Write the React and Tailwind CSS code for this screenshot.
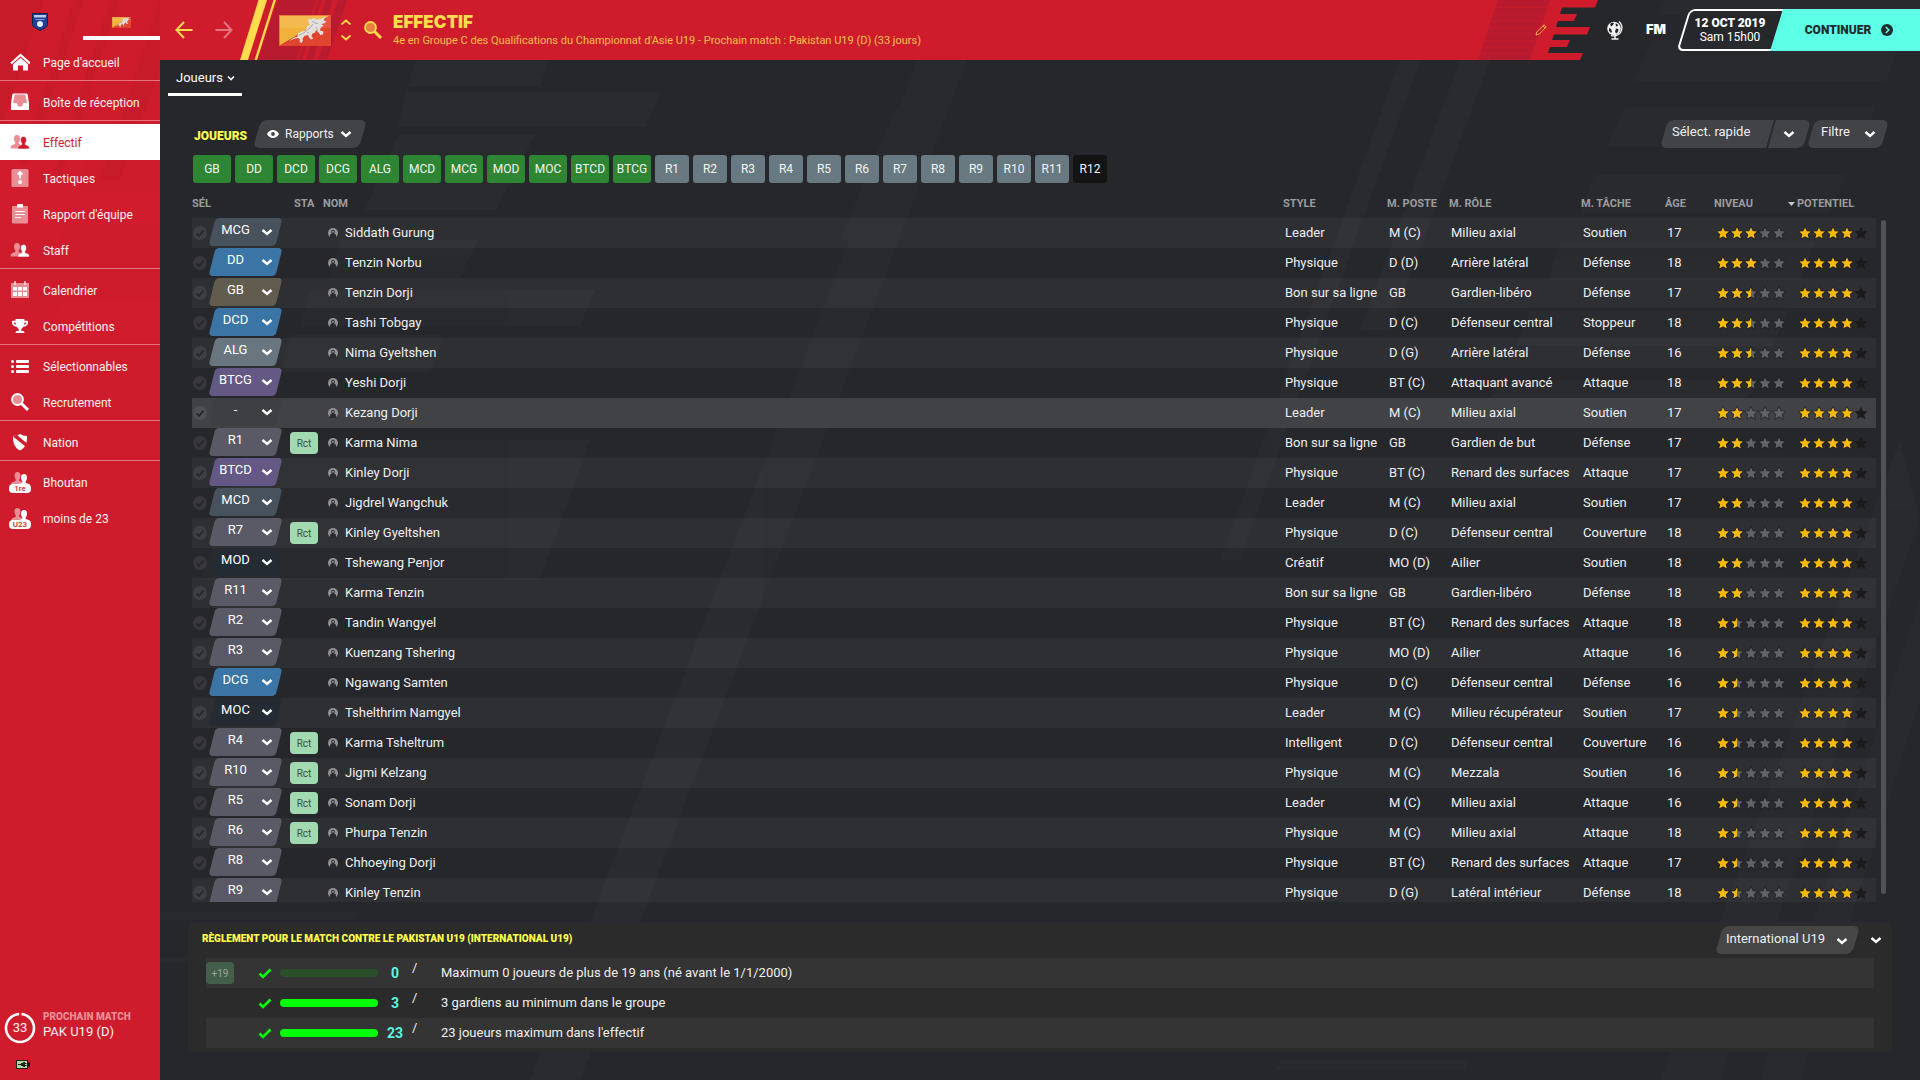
import React from 'react';
import { FaTrophy } from 'react-icons/fa';

const YELLOW = '#ffdc4e';
const PINK = '#ea8d95';

const pillColors = {
    MCG: 'before:bg-[#47525d]',
    MCD: 'before:bg-[#47525d]',
    DD: 'before:bg-[#3b75a6]',
    DCD: 'before:bg-[#3b75a6]',
    DCG: 'before:bg-[#3b75a6]',
    GB: 'before:bg-[#625c4f]',
    ALG: 'before:bg-[#697680]',
    BTCG: 'before:bg-[#645885]',
    BTCD: 'before:bg-[#645885]',
    MOD: 'before:bg-[#252b33]',
    MOC: 'before:bg-[#252b33]',
    '-': 'before:bg-[#3e3f42]',
};

const players = [
    ['MCG', false, 'Siddath Gurung', 'Leader', 'M (C)', 'Milieu axial', 'Soutien', 17, 3],
    ['DD', false, 'Tenzin Norbu', 'Physique', 'D (D)', 'Arrière latéral', 'Défense', 18, 3],
    ['GB', false, 'Tenzin Dorji', 'Bon sur sa ligne', 'GB', 'Gardien-libéro', 'Défense', 17, 2.5],
    ['DCD', false, 'Tashi Tobgay', 'Physique', 'D (C)', 'Défenseur central', 'Stoppeur', 18, 2.5],
    ['ALG', false, 'Nima Gyeltshen', 'Physique', 'D (G)', 'Arrière latéral', 'Défense', 16, 2.5],
    ['BTCG', false, 'Yeshi Dorji', 'Physique', 'BT (C)', 'Attaquant avancé', 'Attaque', 18, 2.5],
    ['-', false, 'Kezang Dorji', 'Leader', 'M (C)', 'Milieu axial', 'Soutien', 17, 2],
    ['R1', true, 'Karma Nima', 'Bon sur sa ligne', 'GB', 'Gardien de but', 'Défense', 17, 2],
    ['BTCD', false, 'Kinley Dorji', 'Physique', 'BT (C)', 'Renard des surfaces', 'Attaque', 17, 2],
    ['MCD', false, 'Jigdrel Wangchuk', 'Leader', 'M (C)', 'Milieu axial', 'Soutien', 17, 2],
    ['R7', true, 'Kinley Gyeltshen', 'Physique', 'D (C)', 'Défenseur central', 'Couverture', 18, 2],
    ['MOD', false, 'Tshewang Penjor', 'Créatif', 'MO (D)', 'Ailier', 'Soutien', 18, 2],
    ['R11', false, 'Karma Tenzin', 'Bon sur sa ligne', 'GB', 'Gardien-libéro', 'Défense', 18, 2],
    ['R2', false, 'Tandin Wangyel', 'Physique', 'BT (C)', 'Renard des surfaces', 'Attaque', 18, 1.5],
    ['R3', false, 'Kuenzang Tshering', 'Physique', 'MO (D)', 'Ailier', 'Attaque', 16, 1.5],
    ['DCG', false, 'Ngawang Samten', 'Physique', 'D (C)', 'Défenseur central', 'Défense', 16, 1.5],
    ['MOC', false, 'Tshelthrim Namgyel', 'Leader', 'M (C)', 'Milieu récupérateur', 'Soutien', 17, 1.5],
    ['R4', true, 'Karma Tsheltrum', 'Intelligent', 'D (C)', 'Défenseur central', 'Couverture', 16, 1.5],
    ['R10', true, 'Jigmi Kelzang', 'Physique', 'M (C)', 'Mezzala', 'Soutien', 16, 1.5],
    ['R5', true, 'Sonam Dorji', 'Leader', 'M (C)', 'Milieu axial', 'Attaque', 16, 1.5],
    ['R6', true, 'Phurpa Tenzin', 'Physique', 'M (C)', 'Milieu axial', 'Attaque', 18, 1.5],
    ['R8', false, 'Chhoeying Dorji', 'Physique', 'BT (C)', 'Renard des surfaces', 'Attaque', 17, 1.5],
    ['R9', false, 'Kinley Tenzin', 'Physique', 'D (G)', 'Latéral intérieur', 'Défense', 18, 1.5],
];

const Chevron = ({ className = '', color = '#fff' }) => (
    <svg width="12" height="8" viewBox="0 0 12 8" fill="none" className={`pointer-events-none shrink-0 ${className}`}>
        <path d="M1.500 2L6 6L10.500 2" stroke={color} strokeWidth="2.400" />
    </svg>
);

const Person = ({ x, y, fill }) => (
    <path
        transform={`translate(${x} ${y})`}
        fill={fill}
        d="M0 0c2.100 0 3 1.600 3 3.800 0 1.600-.6 2.800-1.300 3.600v1.400c1 .7 3.800 1 4.300 2.400.3.700.3 1.500.3 2.300H-6.300c0-.8 0-1.600.3-2.300.5-1.400 3.300-1.700 4.300-2.400V7.400C-2.400 6.600-3 5.400-3 3.800-3 1.600-2.100 0 0 0z"
    />
);

const Icon = ({ children }) => (
    <svg width="20" height="20" viewBox="0 0 20 20" fill="none" className="shrink-0">
        {children}
    </svg>
);

const HomeIcon = () => (
    <Icon>
        <path d="M1 11.500L10.500 3L20 11.500" stroke="#fff" strokeWidth="2.200" />
        <path d="M3 12.200L10.500 5.800L18 12.200V18.500H13V13.500H8V18.500H3z" fill="#fff" />
    </Icon>
);

const InboxIcon = () => (
    <Icon>
        <path d="M4 1.500h12c1 0 1.500.4 1.700 1.200L19 11v7H1v-7l1.300-8.300C2.500 1.900 3 1.500 4 1.500z" fill="#fff" />
        <path d="M5.500 2.500h9c.6 0 .9.3 1 .8L17 11h-3.500c-.5 0-1 3.500-1.800 3.500H8.300C7.500 14.500 7 11 6.500 11H3l1.500-7.700c.1-.5.400-.8 1-.8z" fill={PINK} />
    </Icon>
);

const SquadIcon = ({ front = '#fff', edge = '#ce1c2c' }) => (
    <Icon>
        <Person x={7} y={3} fill={PINK} />
        <path d="M13.500 4.500c2.200 0 3 1.700 3 3.600 0 1.500-.6 2.600-1.200 3.300v1.200c.9.600 3.200.9 3.700 2 .3.700.3 1.400.3 2.400H7.700c0-1 0-1.700.3-2.400.5-1.100 2.800-1.400 3.700-2v-1.200c-.6-.7-1.200-1.800-1.200-3.300 0-1.900.8-3.600 3-3.600z" fill={front} stroke={edge} strokeWidth=".6" />
    </Icon>
);

const TacticsIcon = () => (
    <Icon>
        <rect x="1.500" y="1" width="17" height="18" rx="1.500" fill={PINK} />
        <path d="M10 10.500V5M7.500 6.500L10 4l2.500 2.500" stroke="#fff" strokeWidth="1.800" />
        <circle cx="10" cy="14" r="2" fill="#fff" />
    </Icon>
);

const ReportIcon = () => (
    <Icon>
        <rect x="2" y="2" width="16" height="17.500" rx="1" fill={PINK} />
        <rect x="7" y="0" width="6" height="3.500" rx=".5" fill="#fff" />
        <path d="M5 7.500h10M5 10.500h10M5 13.500h6" stroke="#fff" strokeWidth="1.200" />
    </Icon>
);

const CalendarIcon = () => (
    <Icon>
        <rect x="1" y="3" width="18" height="15" fill={PINK} />
        <path d="M5 1v4M15 1v4" stroke="#fff" strokeWidth="1.200" />
        <path d="M3 7h4v3.500H3zM8 7h4v3.500H8zM13 7h4v3.500h-4zM3 12h4v4H3zM8 12h4v4H8zM13 12h4v4h-4z" fill="#fff" />
    </Icon>
);

const ListIcon = () => (
    <Icon>
        {[4, 9, 14].map((y) => (
            <g key={y} fill="#fff">
                <circle cx="2.500" cy={y + 1.5} r="1.500" />
                <rect x="6" y={y} width="13" height="3" rx="1" />
            </g>
        ))}
    </Icon>
);

const SearchIcon = ({ ring = '#fff', fill = PINK }) => (
    <Icon>
        <circle cx="7.500" cy="7.500" r="5.500" fill={fill} stroke={ring} strokeWidth="1.800" />
        <path d="M11.500 11.500L18 18" stroke={ring} strokeWidth="3" />
    </Icon>
);

const NationIcon = () => (
    <Icon>
        <path d="M3 4c3 0 5-.7 7-2 2 1.300 4 2 7 2 .4 7-2 12-7 14.500C5 16 2.600 11 3 4z" fill="#fff" />
        <path d="M3 4.500L15.500 14.500L17 11.500L7 3z" fill="#ce1c2c" />
    </Icon>
);

const TeamIcon = ({ label }) => (
    <span className="relative -mx-px flex w-[22px] shrink-0 flex-col items-center">
        <svg width="20" height="16" viewBox="0 0 20 16">
            <Person x={7.5} y={0} fill={PINK} />
            <Person x={14} y={2} fill="#fff" />
        </svg>
        <span className="-mt-1 h-[9px] w-full rounded-sm bg-white text-center text-[8px] leading-[9px] font-medium text-[#ce1c2c]">{label}</span>
    </span>
);

const navGroups = [
    [['Page d\'accueil', <HomeIcon />]],
    [['Boîte de réception', <InboxIcon />]],
    [
        ['Effectif', <SquadIcon front="#ce1c2c" edge="#fff" />],
        ['Tactiques', <TacticsIcon />],
        ['Rapport d\'équipe', <ReportIcon />],
        ['Staff', <SquadIcon />],
    ],
    [['Calendrier', <CalendarIcon />], ['Compétitions', <FaTrophy size={16} color="#fff" className="mx-0.5 shrink-0" />]],
    [['Sélectionnables', <ListIcon />], ['Recrutement', <SearchIcon />]],
    [['Nation', <NationIcon />]],
    [['Bhoutan', <TeamIcon label="1re" />], ['moins de 23', <TeamIcon label="U23" />]],
];

// Flag of Bhutan, used in the sidebar tab and in the title bar
const Flag = ({ className }) => (
    <svg viewBox="0 0 52 31" preserveAspectRatio="none" className={className}>
        <path d="M0 0H52L0 31z" fill="#f2b23c" />
        <path d="M52 0V31H0z" fill="#e2452f" />
        <path d="M0 0H52V13H0z" fill="#fff" opacity=".1" />
        <path
            d="M10 26l5-3.500 3-.5 1.500-4 4-2 3-.5 1.500-4 3-1.500-2-3.500 1-3 2.500 1 2-1.500 3.500 1.500 4-.5 4-2.500-1.500 4 3 1-2.500 2-3 .5 2.500 1.500-3 2.500-.5 2.500 3.500 1-.5 3-2.500.5-2-2.500-2.500-2.500-1 2.500-3 1.500-.5 2.500 2 2-2.500 1-2-2-1-2.500-3.500 1-2 2.500.5 2 -1.500 2.500-2-1 .5-2.500-1.500-1.500-3.500.5z"
            fill="#e2dfdd"
        />
        <path d="M20 20l5-2 3-3 3-2 3-4M33 6l3 2 3 .5M28 17l2 1M37 12l2 4" fill="none" stroke="#a9a3a0" strokeWidth=".8" />
        <rect x=".5" y=".5" width="51" height="30" fill="none" stroke="#d8452f" opacity=".5" />
    </svg>
);

const Sidebar = () => (
    <aside className="relative flex w-40 shrink-0 flex-col bg-[#ce1c2c] text-xs text-[#fdf1f2]">
        <svg className="pointer-events-none absolute inset-x-0 top-0 h-[500px] w-full" viewBox="0 0 160 500" preserveAspectRatio="none">
            <path d="M44 0L0 130V0zM84 0L28 165L20 165L74 0zM120 0L60 180L52 180L110 0zM160 0V70L120 180H100z" fill="#9c1522" opacity=".13" />
            <path d="M0 150H90L60 240H0zM70 190H160V225H60zM60 300H160V340H50z" fill="#e02236" opacity=".13" />
        </svg>
        <div className="relative flex h-11 shrink-0">
            <button aria-label="Fédération" className="flex flex-1 items-center justify-center pr-[3px]">
                <svg width="16" height="18" viewBox="0 0 16 18">
                    <path d="M.5.500h15v11c0 2.500-4 4-7.500 6C4.500 15.500.5 14 .5 11.500z" fill="#1d3f94" stroke="#16204a" />
                    <path d="M2 2h12v2.500H2z" fill="#b9c9ea" />
                    <path d="M3.500 6.500h9" stroke="#7d9cdc" />
                    <circle cx="8" cy="11" r="3" fill="#e6ecf8" />
                </svg>
            </button>
            <button aria-label="Bhoutan U19" className="mb-1 flex w-[77px] items-center justify-center border-b-4 border-white pt-3">
                <Flag className="mb-1 h-[11px] w-[19px]" />
            </button>
        </div>
        <nav className="relative">
            {navGroups.map((group, i) => (
                <ul key={i} className={i ? 'border-t border-[#e8727c] pt-[3px]' : ''}>
                    {group.map(([label, icon]) => (
                        <li key={label}>
                            <a
                                href="#"
                                className={`flex h-9 items-center gap-[13px] pl-[10px] ${label === 'Effectif' ? 'bg-white text-[#ce1c2c]' : ''}`}
                            >
                                {icon}
                                <span className="pt-0.5">{label}</span>
                            </a>
                        </li>
                    ))}
                </ul>
            ))}
        </nav>
        <div className="mt-auto flex items-center gap-[7px] pl-1">
            <div className="relative flex size-8 shrink-0 items-center justify-center">
                <svg width="32" height="32" viewBox="0 0 32 32" className="absolute inset-0">
                    <circle cx="16" cy="16" r="14" fill="none" stroke="#fff" strokeWidth="2.600" strokeDasharray="85 3" strokeDashoffset="-1.500" transform="rotate(-90 16 16)" />
                </svg>
                <span className="text-[13px]">33</span>
            </div>
            <div className="-mt-2 leading-[15px]">
                <p className="text-[10px] font-black text-[#ea8d95]">PROCHAIN MATCH</p>
                <p className="text-[13px]">PAK U19 (D)</p>
            </div>
        </div>
        <svg width="14" height="9" viewBox="0 0 14 9" className="mt-4 mb-[11px] ml-4 shrink-0">
            <rect x=".5" y=".5" width="11" height="8" fill="#b3d79b" stroke="#222" />
            <path d="M12 2.500h2v4h-2z" fill="#111" />
            <path d="M2 4.500h3M9 3.500h1.500M9 5.500h1.500" stroke="#222" />
            <path d="M5 3h1.500l1-1H9v5H7.500l-1-1H5z" fill="#222" />
        </svg>
    </aside>
);

const Header = () => (
    <header className="flex h-[60px] shrink-0">
        <div className="flex min-w-0 flex-1 items-center bg-[#ce1c2c]">
            <button aria-label="Précédent" className="ml-[15px]">
                <svg width="18" height="18" viewBox="0 0 18 18" fill="none" stroke={YELLOW} strokeWidth="2">
                    <path d="M17.500 9H2M9 1L1.500 9L9 17" />
                </svg>
            </button>
            <button aria-label="Suivant" className="ml-[22px]">
                <svg width="18" height="18" viewBox="0 0 18 18" fill="none" stroke="#e57480" strokeWidth="2">
                    <path d="M.5 9H16M9 1L16.500 9L9 17" />
                </svg>
            </button>
            <div className="relative ml-[7px] flex h-full w-[107px] shrink-0 items-center pl-[39px]">
                <svg className="absolute inset-0" width="107" height="60" viewBox="0 0 107 60">
                    <path d="M38 0H76L56 60H18z" fill="#b81a2f" />
                    <path d="M78 0h4l-20 60h-4zM86 0h7l-20 60h-7zM98 0h9l-20 60h-9z" fill="#b81a2f" />
                    <path d="M18.500 0H27L8 60H0z" fill={YELLOW} />
                    <path d="M33.500 0H36L17 60H14.500z" fill={YELLOW} />
                </svg>
                <Flag className="relative h-[31px] w-[52px]" />
            </div>
            <div className="-ml-[6px] flex flex-col gap-[10px]">
                <button aria-label="Équipe précédente">
                    <svg width="10" height="6" viewBox="0 0 10 6" fill="none" stroke={YELLOW} strokeWidth="1.800"><path d="M.5 5.500L5 1.500L9.500 5.500" /></svg>
                </button>
                <button aria-label="Équipe suivante">
                    <svg width="10" height="6" viewBox="0 0 10 6" fill="none" stroke={YELLOW} strokeWidth="1.800"><path d="M.5.500L5 4.500L9.500.500" /></svg>
                </button>
            </div>
            <button aria-label="Rechercher" className="ml-3">
                <SearchIcon ring={YELLOW} fill="#e8803f" />
            </button>
            <div className="ml-[10px]">
                <h1 className="font-['Inter',sans-serif] text-[17px] leading-[22px] font-black text-[#ffdc4e]">EFFECTIF</h1>
                <p className="text-[11px] leading-4 whitespace-nowrap text-[#ffc04a]">
                    4e en Groupe C des Qualifications du Championnat d'Asie U19 - Prochain match : Pakistan U19 (D) (33 jours)
                </p>
            </div>
        </div>
        <div className="relative -ml-px w-[120px] shrink-0">
            <svg width="120" height="60" viewBox="0 0 120 60" className="block">
                <path d="M0 0H120L117 7.500H84L82 14H99L96 21H80L78 27H112L109 34.500H76L74 40H92L89 47H72L70 53H105L102 60H0z" fill="#ce1c2c" />
                <path d="M20 0H72L52 60H0z" fill="#b81a2f" />
                <path d="M10 7.500H72M10 14H72M8 21H72M6 27.500H72M4 34H72M0 40.500H68M0 47H64M0 53.500H60" stroke="#ce1c2c" strokeWidth="1" opacity=".7" />
            </svg>
            <button aria-label="Modifier" className="absolute top-6 left-[57px]">
                <svg width="12" height="12" viewBox="0 0 12 12" fill="none" stroke="#ffb04a">
                    <path d="M1 11l.8-3L9 .800l2.200 2.200L4 10.200zM8 2l2.200 2.200" />
                </svg>
            </button>
        </div>
        <div className="flex shrink-0 items-center">
            <button aria-label="Monde" className="ml-2">
                <svg width="18" height="20" viewBox="0 0 18 20" fill="none">
                    <circle cx="8" cy="8.500" r="6.800" fill="#f4f4f4" />
                    <path d="M4 4l2-1.500 2 .5-1 2-2 1.500zM9.500 3.500l2 .5.5 2-2 .5zM3 8l2 1 1 3-1 1-2-2zM10 8.500l2.500.500-.5 3-2 1.500-1-2z" fill="#26272b" />
                    <path d="M13 1.500c4.500 4 3.500 11-1.500 13.500-2 1-4.500 1-6.500.3" stroke="#f4f4f4" strokeWidth="1.300" />
                    <path d="M9 16v2.500M5.500 19h7" stroke="#f4f4f4" strokeWidth="1.500" />
                </svg>
            </button>
            <button className="ml-[22px] font-['Inter',sans-serif] text-[13px] font-black text-white">FM</button>
            <button className="relative ml-[6px] h-[42px] w-[112px] pr-3 pl-4 text-center text-xs leading-[14px] text-white before:absolute before:inset-y-0 before:right-[-4px] before:left-[11px] before:-skew-x-[17deg] before:rounded-md before:border-2 before:border-white">
                <span className="relative block font-black whitespace-nowrap">12 OCT 2019</span>
                <span className="relative block">Sam 15h00</span>
            </button>
            <button className="relative -ml-[14px] flex h-[42px] w-[150px] items-center justify-center gap-[10px] bg-[#5dffe6] pl-2 text-xs font-black text-[#1e2b2e] [clip-path:polygon(13px_0,100%_0,100%_100%,0_100%)]">
                CONTINUER
                <svg width="12" height="12" viewBox="0 0 12 12" fill="none">
                    <circle cx="6" cy="6" r="6" fill="#1e2b2e" />
                    <path d="M4.800 3L7.800 6L4.800 9" stroke="#5dffe6" strokeWidth="1.600" />
                </svg>
            </button>
        </div>
    </header>
);

// faint slanted blocks behind the whole screen
const Backdrop = () => (
    <svg className="pointer-events-none absolute inset-0 size-full" viewBox="0 0 1760 1080" preserveAspectRatio="xMidYMid slice">
        <g fill="#fff" opacity=".015">
            <path d="M256 60H388L380 86H248zM246 92H500L486 127H238zM238 135H375L336 210H205z" />
            <path d="M780 0H830L420 1080H370zM735 110H755L700 240H680z" />
            <path d="M1505 0H1760V15H1498zM1492 40H1740L1727 81H1474zM1465 107H1716L1700 147H1446zM1434 175H1686L1670 213H1420zM1400 242H1655L1640 280H1388zM1370 311H1628L1612 346H1356zM1338 380H1596L1580 412H1324z" />
            <path d="M1330 60L1230 330L1200 330L1300 60zM1260 60L1080 560H1060L1240 60z" />
            <path d="M1760 520L1560 1080H1500L1740 440zM1760 700L1640 1080H1600L1760 600z" />
            <path d="M180 240H318L300 278H170zM150 290H435L420 326H140zM130 335H285L270 372H120zM90 440H430L380 580H40z" />
            <path d="M0 912H200L195 920H0zM1120 1060H1310L1305 1070H1115zM0 957H190V962H0z" />
        </g>
    </svg>
);

const STAR = 'M6 .5l1.700 3.700 4 .4-3 2.700.9 4L6 9.300 2.400 11.300l.9-4-3-2.700 4-.4z';

const Stars = ({ value, potential }) => (
    <span className="flex" role="img" aria-label={`${value} / 5`}>
        {[0, 1, 2, 3, 4].map((i) => {
            const empty = potential ? '#1b1b1c' : '#626366';
            const big = potential && i >= value;
            return (
                <svg key={i} width="14" height="14" viewBox={big ? '0 0 12 12' : '-1 -1 14 14'}>
                    <path d={STAR} fill={empty} stroke={big ? 'none' : '#1d1d1f'} strokeOpacity=".5" strokeWidth="2" paintOrder="stroke" />
                    {value > i && (
                        <path d={STAR} fill="#f9bb0b" className={value - i < 1 ? '[clip-path:inset(0_50%_0_0)]' : ''} />
                    )}
                </svg>
            );
        })}
    </span>
);

const PositionSelect = ({ value }) => (
    <span
        className={`relative ml-px flex h-7 w-[69px] items-center before:absolute before:inset-y-0 before:inset-x-px before:-skew-x-[14deg] before:rounded ${pillColors[value] || 'before:bg-[#5a5a66]'}`}
    >
        <select
            aria-label="Position"
            defaultValue={value}
            className="relative h-7 w-full appearance-none pr-5 pb-1 text-center text-[13px] text-white [text-align-last:center]"
        >
            <option>{value}</option>
        </select>
        <Chevron className="absolute top-[10px] right-[7px]" />
    </span>
);

const PlayerTable = () => (
    <table className="w-full table-fixed text-left text-[13px] text-[#efeff0]">
        <colgroup>
            <col className="w-[18px]" />
            <col className="w-20" />
            <col className="w-[33px]" />
            <col />
            <col className="w-[104px]" />
            <col className="w-[62px]" />
            <col className="w-[132px]" />
            <col className="w-[84px]" />
            <col className="w-[49px]" />
            <col className="w-[74px]" />
            <col className="w-[88px]" />
        </colgroup>
        <thead>
            <tr className="h-[30px] text-[11px] text-[#9c9c9f] [&>th]:pt-0.5">
                <th colSpan={2}>SÉL</th>
                <th className="pl-1">STA</th>
                <th>NOM</th>
                <th>STYLE</th>
                <th>M. POSTE</th>
                <th>M. RÔLE</th>
                <th>M. TÂCHE</th>
                <th>ÂGE</th>
                <th>NIVEAU</th>
                <th>
                    <button className="flex items-center gap-0.5 font-bold">
                        <svg width="7" height="4" viewBox="0 0 7 4"><path d="M0 0h7L3.500 4z" fill="#c4c4c6" /></svg>
                        POTENTIEL
                    </button>
                </th>
            </tr>
        </thead>
        <tbody>
            {players.map(([pos, rct, name, style, poste, role, duty, age, stars], i) => (
                <tr key={name} className={`h-[30px] ${i === 6 ? 'bg-[#414245]' : i % 2 === 0 ? 'bg-white/[4%]' : ''}`}>
                    <td>
                        <label className="relative ml-px block size-[14px]">
                            <input type="checkbox" aria-label={name} className="block size-[14px] appearance-none rounded-full bg-white/[8%]" />
                            <svg className="pointer-events-none absolute inset-0" width="14" height="14" viewBox="0 0 14 14" fill="none">
                                <path d="M3.500 7.500L6 10L10.500 4.500" stroke="#27282b" strokeWidth="1.800" />
                            </svg>
                        </label>
                    </td>
                    <td className="pb-0.5">
                        <PositionSelect value={pos} />
                    </td>
                    <td>
                        {rct && (
                            <span className="flex h-[22px] w-7 items-center justify-center rounded-sm bg-[#a1d9b1] text-[10px] text-[#3c5145]">Rct</span>
                        )}
                    </td>
                    <td>
                        <span className="flex items-center gap-[7px] pl-[5px]">
                            <svg width="10" height="10" viewBox="0 0 10 10">
                                <circle cx="5" cy="5" r="5" fill="#929294" />
                                <path d="M5 1.800c1.300 0 1.800 1 1.800 2 0 .8-.3 1.400-.7 1.800.9.300 2 .8 2 2.400V10H1.900V8c0-1.600 1.100-2.100 2-2.400-.4-.4-.7-1-.7-1.800 0-1 .5-2 1.800-2z" fill="#2a2b2f" />
                                <circle cx="5" cy="3.700" r="1" fill="#929294" />
                            </svg>
                            {name}
                        </span>
                    </td>
                    <td className="pl-0.5 whitespace-nowrap">{style}</td>
                    <td className="pl-0.5 whitespace-nowrap">{poste}</td>
                    <td className="pl-0.5 whitespace-nowrap">{role}</td>
                    <td className="pl-0.5">{duty}</td>
                    <td className="pl-0.5">{age}</td>
                    <td className="pl-0.5">
                        <Stars value={stars} />
                    </td>
                    <td className="pl-[10px]">
                        <Stars value={4} potential />
                    </td>
                </tr>
            ))}
        </tbody>
    </table>
);

const rules = [
    ['+19', false, 0, 'Maximum 0 joueurs de plus de 19 ans (né avant le 1/1/2000)'],
    [null, true, 3, '3 gardiens au minimum dans le groupe'],
    [null, true, 23, '23 joueurs maximum dans l\'effectif'],
];

const RulesPanel = () => (
    <section className="mt-5 mb-7 shrink-0 rounded-md bg-[#2b2b2b] pb-1">
        <div className="flex h-9 items-center justify-between pr-[10px] pl-[14px]">
            <h2 className="pb-1 text-[10px] font-black text-[#ffff4a]">RÈGLEMENT POUR LE MATCH CONTRE LE PAKISTAN U19 (INTERNATIONAL U19)</h2>
            <div className="flex items-center gap-[10px]">
                <span className="relative flex h-7 w-[145px] items-center before:absolute before:inset-y-0 before:inset-x-1 before:-skew-x-[16deg] before:rounded-md before:bg-[#464646]">
                    <select aria-label="Règlement" className="relative h-7 w-full appearance-none pb-0.5 pl-[11px] text-[13px] text-[#efeff0]">
                        <option>International U19</option>
                    </select>
                    <Chevron className="absolute top-[11px] right-[12px]" />
                </span>
                <button aria-label="Réduire">
                    <Chevron />
                </button>
            </div>
        </div>
        <ul className="mx-[18px]">
            {rules.map(([badge, full, count, text], i) => (
                <li key={text} className={`flex h-[30px] items-center text-[13px] text-[#efeff0] ${i % 2 ? '' : 'bg-[#343434]'}`}>
                    <span className="w-[52px] shrink-0">
                        {badge && (
                            <span className="flex h-[22px] w-7 items-center justify-center rounded-sm bg-[#435f4b] text-[10px] text-[#98a69c]">{badge}</span>
                        )}
                    </span>
                    <svg width="14" height="11" viewBox="0 0 14 11" fill="none" className="shrink-0">
                        <path d="M1.500 5.500L5 9L12.500 1.500" stroke="#0cff0c" strokeWidth="2.600" />
                    </svg>
                    <span className={`ml-2 h-2 w-[98px] shrink-0 rounded-full ${full ? 'bg-[#00ff00]' : 'bg-[#2c4f2b]'}`} />
                    <span className="w-[34px] shrink-0 text-center text-sm font-bold text-[#5df5e2]">{count}</span>
                    <span className="w-[29px] shrink-0 pb-[10px]">/</span>
                    <span>{text}</span>
                </li>
            ))}
        </ul>
    </section>
);

const starters = ['GB', 'DD', 'DCD', 'DCG', 'ALG', 'MCD', 'MCG', 'MOD', 'MOC', 'BTCD', 'BTCG'];
const subs = ['R1', 'R2', 'R3', 'R4', 'R5', 'R6', 'R7', 'R8', 'R9', 'R10', 'R11', 'R12'];

export default function App() {
    return (
        <div className="flex h-screen overflow-hidden bg-[#26272b] font-['Roboto',sans-serif]">
            <Sidebar />
            <main className="relative flex min-w-0 flex-1 flex-col">
                <Backdrop />
                <div className="relative flex min-h-0 flex-1 flex-col">
                    <Header />
                    <div className="flex h-9 shrink-0 pl-2">
                        <button className="flex w-[74px] items-center gap-1 border-b-[3px] border-white pt-0.5 pl-2 text-[13px] text-white">
                            Joueurs
                            <svg width="8" height="6" viewBox="0 0 8 6" fill="none" className="shrink-0">
                                <path d="M1 1.500L4 4.500L7 1.500" stroke="#fff" strokeWidth="1.600" />
                            </svg>
                        </button>
                    </div>
                    <div className="flex min-h-0 flex-1 flex-col px-7 pt-6">
                        <div className="flex shrink-0 items-center pr-[3px]">
                            <h2 className="pt-1 pl-[6px] text-xs font-black text-[#ffff4a]">JOUEURS</h2>
                            <button className="relative ml-[6px] flex h-7 w-[114px] items-center gap-[6px] pl-[14px] text-xs text-[#efeff0] before:absolute before:inset-y-0 before:inset-x-1 before:-skew-x-[16deg] before:rounded-md before:bg-[#424347]">
                                <svg width="12" height="8" viewBox="0 0 12 8" className="relative">
                                    <path d="M0 4C1.500 1.300 3.500 0 6 0s4.500 1.300 6 4C10.500 6.700 8.500 8 6 8S1.500 6.700 0 4z" fill="#fff" />
                                    <circle cx="6" cy="4" r="1.900" fill="#424347" />
                                </svg>
                                <span className="relative">Rapports</span>
                                <Chevron className="relative" />
                            </button>
                            <div className="ml-auto flex text-[13px] text-[#efeff0]">
                                <button className="relative h-7 w-[110px] pb-1 pl-3 text-left before:absolute before:inset-y-0 before:right-0 before:left-1 before:-skew-x-[16deg] before:rounded-l-md before:bg-[#424347]">
                                    <span className="relative">Sélect. rapide</span>
                                </button>
                                <button aria-label="Options de sélection" className="relative flex h-7 w-[37px] items-center justify-center before:absolute before:inset-y-0 before:right-0 before:left-0.5 before:-skew-x-[16deg] before:rounded-r-md before:bg-[#424347]">
                                    <Chevron className="relative" />
                                </button>
                                <button className="relative flex h-7 w-[82px] items-center gap-[14px] pl-[14px] before:absolute before:inset-y-0 before:inset-x-1 before:-skew-x-[16deg] before:rounded-md before:bg-[#424347]">
                                    <span className="relative pb-1">Filtre</span>
                                    <Chevron className="relative" />
                                </button>
                            </div>
                        </div>
                        <div className="mt-[7px] flex shrink-0 gap-1 pl-[5px] text-xs text-[#f2f5f2]">
                            {starters.map((p) => (
                                <button key={p} className="h-7 w-[38px] rounded-[3px] bg-[#2e8635]">{p}</button>
                            ))}
                            {subs.map((p) => (
                                <button key={p} className={`h-7 w-[34px] rounded-[3px] ${p === 'R12' ? 'bg-[#141414]' : 'bg-[#687981]'}`}>{p}</button>
                            ))}
                        </div>
                        <div className="mt-[5px] flex min-h-0 flex-1 gap-[5px] overflow-hidden pr-[6px] pl-1">
                            <div className="min-w-0 flex-1">
                                <PlayerTable />
                            </div>
                            <div className="mt-8 mb-2 w-[5px] shrink-0 rounded-full bg-[#515256]" />
                        </div>
                        <RulesPanel />
                    </div>
                </div>
            </main>
        </div>
    );
}
